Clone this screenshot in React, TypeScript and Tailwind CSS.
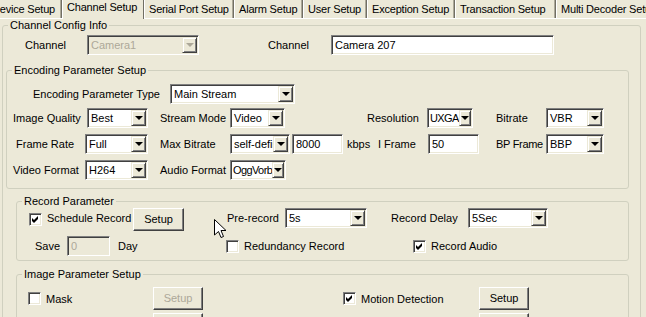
import React from 'react';

const sunken =
  'border border-t-[#808080] border-l-[#808080] border-b-white border-r-white shadow-[inset_1px_1px_0_#404040,inset_-1px_-1px_0_#ECE9D8]';
const raised =
  'border border-t-white border-l-white border-b-[#404040] border-r-[#404040] shadow-[inset_-1px_-1px_0_#808080] bg-[#ECE9D8]';

const DropButton = ({ disabled, narrow }: { disabled?: boolean; narrow?: boolean }) => (
  <div
    className={`${
      narrow ? 'w-[12px]' : 'w-[15px]'
    } h-full shrink-0 flex items-center justify-center border border-t-[#ECE9D8] border-l-[#ECE9D8] border-b-[#404040] border-r-[#404040] shadow-[inset_1px_1px_0_white,inset_-1px_-1px_0_#808080] bg-[#ECE9D8]`}
  >
    <div
      className={`w-0 h-0 border-l-[4px] border-r-[4px] border-t-[4px] border-l-transparent border-r-transparent ${
        disabled ? 'border-t-[#ACA899]' : 'border-t-black'
      }`}
    />
  </div>
);

const Combo = ({
  value,
  className,
  disabled,
  tight,
}: {
  value: string;
  className: string;
  disabled?: boolean;
  tight?: boolean;
}) => (
  <div
    className={`${className} h-[20px] shrink-0 flex p-[1px] ${sunken} ${
      disabled ? 'bg-[#ECE9D8] text-[#ACA899]' : 'bg-white'
    }`}
  >
    <span
      className={`flex-1 min-w-0 leading-[16px] overflow-hidden whitespace-nowrap ${
        tight ? 'pl-[1px] tracking-[-0.6px]' : 'pl-[2px]'
      }`}
    >
      {value}
    </span>
    <DropButton disabled={disabled} narrow={tight} />
  </div>
);

const TextBox = ({ value, className, disabled }: { value: string; className: string; disabled?: boolean }) => (
  <div
    className={`${className} h-[20px] shrink-0 p-[1px] ${sunken} ${
      disabled ? 'bg-[#ECE9D8] text-[#ACA899]' : 'bg-white'
    }`}
  >
    <span className="block pl-[2px] leading-[16px] whitespace-nowrap overflow-hidden">{value}</span>
  </div>
);

const Button = ({ label, className, disabled }: { label: string; className: string; disabled?: boolean }) => (
  <div
    className={`${className} h-[23px] shrink-0 flex items-center justify-center ${raised} ${
      disabled ? 'text-[#ACA899]' : ''
    }`}
  >
    {label}
  </div>
);

const CheckBox = ({ checked, className = '' }: { checked?: boolean; className?: string }) => (
  <div className={`${className} w-[13px] h-[13px] shrink-0 bg-white flex items-center justify-center ${sunken}`}>
    {checked && (
      <svg width="7" height="7" viewBox="0 0 7 7">
        <polygon points="0,2 2,4 6,0 6,3 2,7 0,5" fill="black" />
      </svg>
    )}
  </div>
);

const Label = ({ text, className = '' }: { text: string; className?: string }) => (
  <span className={`${className} shrink-0 whitespace-nowrap leading-[20px]`}>{text}</span>
);

const Group = ({
  title,
  className,
  children,
}: {
  title: string;
  className: string;
  children: React.ReactNode;
}) => (
  <fieldset className={`${className} border border-[#D0D0BF] rounded-[3px]`}>
    <legend className="ml-[5px] px-[2px] leading-[13px]">{title}</legend>
    {children}
  </fieldset>
);

const tabs = [
  { label: 'Device Setup', w: 'w-[75px] -ml-[13px]' },
  { label: 'Channel Setup', w: 'w-[82px]', active: true },
  { label: 'Serial Port Setup', w: 'w-[90px]' },
  { label: 'Alarm Setup', w: 'w-[69px]' },
  { label: 'User Setup', w: 'w-[64px]' },
  { label: 'Exception Setup', w: 'w-[88px]' },
  { label: 'Transaction Setup', w: 'w-[101px]' },
  { label: 'Multi Decoder Setup', w: 'w-[120px]' },
];

export default function App() {
  return (
    <div className="relative w-[646px] h-[317px] overflow-hidden bg-[#ECE9D8] text-black text-[11px] font-['Liberation_Sans',Arial,sans-serif]">
      {/* tab strip */}
      <div className="flex h-[18px]">
        {tabs.map((t) => (
          <div
            key={t.label}
            className={`${t.w} shrink-0 flex pl-[4px] overflow-hidden whitespace-nowrap border-l border-l-white border-r border-r-[#716F64] ${
              t.active
                ? 'relative z-10 h-[19px] pt-[1px] bg-[#ECE9D8]'
                : 'h-[18px] pt-[3px] shadow-[inset_-1px_0_0_#ACA899]'
            }`}
          >
            <span className="leading-[13px] tracking-[-0.2px]">{t.label}</span>
          </div>
        ))}
      </div>

      {/* tab page */}
      <div className="border-t border-t-white">
        <Group title="Channel Config Info" className="ml-[2px] w-[639px] h-[320px]">
          <div className="flex items-center h-[20px] mt-[3px] pl-[22px]">
            <Label text="Channel" className="w-[62px]" />
            <Combo value="Camera1" className="w-[112px]" disabled />
            <Label text="Channel" className="ml-[69px] w-[63px]" />
            <TextBox value="Camera 207" className="w-[223px]" />
          </div>

          <Group title="Encoding Parameter Setup" className="ml-[3px] mt-[9px] w-[623px] pb-[8px]">
            <div className="flex items-center h-[20px] mt-[7px] pl-[26px]">
              <Label text="Encoding Parameter Type" className="w-[137px]" />
              <Combo value="Main Stream" className="w-[125px]" />
            </div>
            <div className="flex items-center h-[20px] mt-[4px] pl-[6px]">
              <Label text="Image Quality" className="w-[74px]" />
              <Combo value="Best" className="w-[61px]" />
              <Label text="Stream Mode" className="ml-[12px] w-[70px]" />
              <Combo value="Video" className="w-[55px]" />
              <Label text="Resolution" className="ml-[82px] w-[60px]" />
              <Combo value="UXGA" className="w-[46px]" tight />
              <Label text="Bitrate" className="ml-[23px] w-[50px]" />
              <Combo value="VBR" className="w-[58px]" />
            </div>
            <div className="flex items-center h-[20px] mt-[6px] pl-[9px]">
              <Label text="Frame Rate" className="w-[69px]" />
              <Combo value="Full" className="w-[63px]" />
              <Label text="Max Bitrate" className="ml-[12px] w-[70px]" />
              <Combo value="self-define" className="w-[60px]" />
              <TextBox value="8000" className="ml-[2px] w-[51px]" />
              <Label text="kbps" className="ml-[4px] w-[31px]" />
              <Label text="I Frame" className="w-[50px]" />
              <TextBox value="50" className="w-[51px]" />
              <Label text="BP Frame" className="ml-[17px] w-[50px] tracking-[-0.3px]" />
              <Combo value="BBP" className="w-[58px]" />
            </div>
            <div className="flex items-center h-[20px] mt-[6px] pl-[6px]">
              <Label text="Video Format" className="w-[72px]" />
              <Combo value="H264" className="w-[63px]" />
              <Label text="Audio Format" className="ml-[12px] w-[70px]" />
              <Combo value="OggVorbis" className="w-[56px]" tight />
            </div>
          </Group>

          <Group title="Record Parameter" className="ml-[13px] mt-[6px] w-[613px] pb-[4px]">
            <div className="flex items-start h-[24px] pl-[12px]">
              <CheckBox checked className="mt-[5px]" />
              <Label text="Schedule Record" className="ml-[5px] w-[86px]" />
              <Button label="Setup" className="w-[51px]" />
              <Label text="Pre-record" className="ml-[43px] w-[58px]" />
              <Combo value="5s" className="w-[82px]" />
              <Label text="Record Delay" className="ml-[24px] w-[77px]" />
              <Combo value="5Sec" className="w-[80px]" />
            </div>
            <div className="flex items-center h-[20px] mt-[4px] pl-[18px]">
              <Label text="Save" className="w-[32px]" />
              <TextBox value="0" className="w-[43px]" disabled />
              <Label text="Day" className="ml-[8px] w-[108px]" />
              <CheckBox />
              <Label text="Redundancy Record" className="ml-[5px] w-[169px]" />
              <CheckBox checked />
              <Label text="Record Audio" className="ml-[5px]" />
            </div>
          </Group>

          <Group title="Image Parameter Setup" className="ml-[13px] mt-[7px] w-[613px] h-[80px]">
            <div className="flex items-center h-[23px] mt-[6px] pl-[11px]">
              <CheckBox />
              <Label text="Mask" className="ml-[5px] w-[107px]" />
              <Button label="Setup" className="w-[50px]" disabled />
              <CheckBox className="ml-[140px]" checked />
              <Label text="Motion Detection" className="ml-[5px] w-[118px]" />
              <Button label="Setup" className="w-[50px]" />
            </div>
            <div className="flex items-center h-[23px] mt-[3px] pl-[136px]">
              <Button label="Setup" className="w-[50px]" disabled />
              <Button label="Setup" className="ml-[276px] w-[50px]" />
            </div>
          </Group>
        </Group>
      </div>

      {/* mouse pointer over the dialog */}
      <svg className="absolute left-[214px] top-[219px]" width="13" height="20" viewBox="0 0 13 20">
        <polygon
          points="0.5,0.5 0.5,16 4.5,12.5 7,18.5 9.5,17.5 7,11.5 12,11.5"
          fill="white"
          stroke="black"
          strokeWidth="1"
        />
      </svg>
    </div>
  );
}
